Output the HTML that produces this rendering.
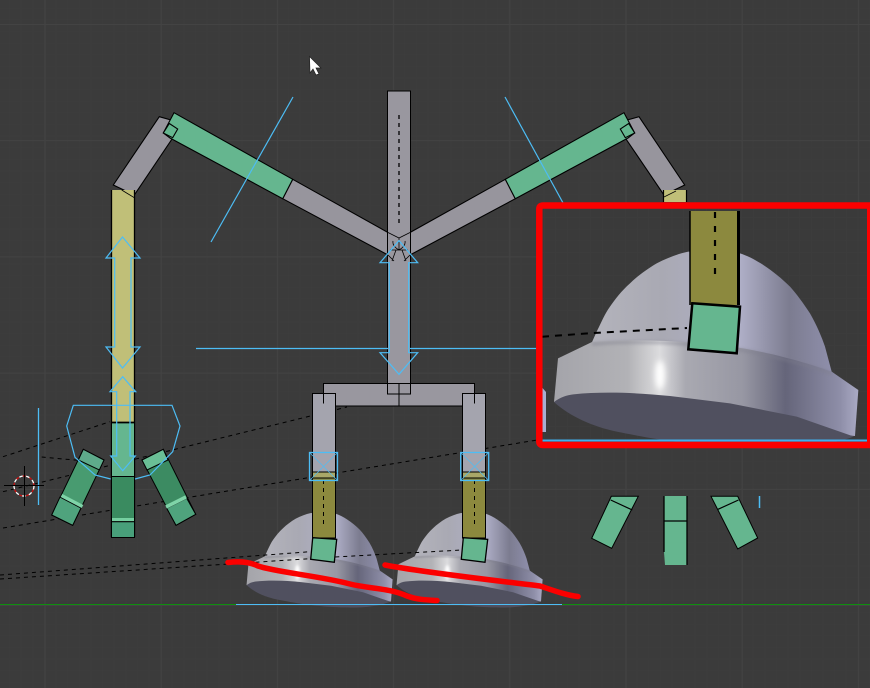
<!DOCTYPE html>
<html><head><meta charset="utf-8"><title>Rig</title>
<style>html,body{margin:0;padding:0;background:#3b3b3b}svg{display:block}</style></head>
<body>
<svg width="870" height="688" viewBox="0 0 870 688" xmlns="http://www.w3.org/2000/svg">
<defs>
<pattern id="minor" width="11.62" height="11.62" patternUnits="userSpaceOnUse" x="10" y="8.5"><path d="M11.62 0V11.62M0 11.62H11.62" stroke="#3d3d3d" fill="none"/></pattern>
<pattern id="major" width="116.2" height="116.2" patternUnits="userSpaceOnUse" x="44.5" y="24"><path d="M.5 0V116.2M0 .5H116.2" stroke="#434343" fill="none"/></pattern>
<linearGradient id="db" gradientUnits="userSpaceOnUse" x1="180" x2="900" y1="0" y2="0"><stop offset="0" stop-color="#b4b4bc"/><stop offset=".3" stop-color="#a9a9b3"/><stop offset=".62" stop-color="#b0b0c8"/><stop offset=".83" stop-color="#7c7c90"/><stop offset="1" stop-color="#8e8eaa"/></linearGradient>
<linearGradient id="br" gradientUnits="userSpaceOnUse" x1="75" x2="985" y1="0" y2="0"><stop offset="0" stop-color="#a4a4aa"/><stop offset=".24" stop-color="#b2b2b6"/><stop offset=".345" stop-color="#dcdcde"/><stop offset=".43" stop-color="#a9a9b1"/><stop offset=".62" stop-color="#9797a3"/><stop offset=".76" stop-color="#65657a"/><stop offset=".94" stop-color="#8e8ea8"/><stop offset="1" stop-color="#aaaac4"/></linearGradient>
<filter id="bl" x="-100%" y="-50%" width="300%" height="200%"><feGaussianBlur stdDeviation="9"/></filter>
<filter id="bl2" x="-10%" y="-50%" width="120%" height="200%"><feGaussianBlur stdDeviation="5"/></filter>
<g id="dome">
<path d="M180 470L200 425C215 395 225 370 240 350C255 328 275 302 300 280C325 256 350 238 380 220C410 205 440 192 475 185L630 190C655 198 680 212 700 225C730 245 755 265 780 290C800 312 820 340 840 370C860 405 875 440 885 470L905 545L800 570L300 500Z" fill="url(#db)"/>
<path d="M84 505L186 456Q400 440 640 475C750 495 850 525 905 545L985 600L975 738L500 700L72 636Z" fill="url(#br)"/>
<path d="M186 462Q400 446 640 481C750 501 850 531 905 551" fill="none" stroke="#7e7e8c" stroke-width="8" opacity=".55" filter="url(#bl2)"/>
<ellipse cx="390" cy="555" rx="15" ry="44" fill="#fff" filter="url(#bl)"/>
<path d="M72 636C90 622 110 615 130 613C220 604 320 608 420 618L600 640L800 680L972 740C880 772 790 778 700 775C520 775 360 745 260 725C190 710 120 680 72 636Z" fill="#50505f"/>
</g>
</defs>
<rect width="870" height="688" fill="#3b3b3b"/>
<rect width="870" height="688" fill="url(#minor)"/>
<rect width="870" height="688" fill="url(#major)"/>

<!-- ground -->
<rect x="0" y="604" width="870" height="1" fill="#0f8f0f"/>

<!-- domes -->
<use href="#dome" transform="translate(235 483.4) scale(.16)"/>
<use href="#dome" transform="translate(385 483.4) scale(.16)"/>
<rect x="236" y="604" width="326" height="1" fill="#4dbdf5"/>

<!-- dashed relationship lines -->
<g stroke="#000" stroke-width="1" stroke-dasharray="4 4" fill="none">
<path d="M3 456.7L110 421.7"/>
<path d="M3 491.7L347 407"/>
<path d="M3 528L537 440"/>
<path d="M41.7 457L93 461.7"/>
<path d="M0 575L310 551.7"/>
<path d="M0 579L335 557L462 550"/>
</g>

<!-- arms -->
<g stroke="#000" stroke-width="1.1" stroke-linejoin="miter">
<path d="M159.3 116.7L113.3 185L134.3 195L172 139L178 122Z" fill="#97959d"/>
<path d="M639 116.7L684.7 185L664 195L626 139L620 122Z" fill="#97959d"/>
<path d="M292.7 179.3L388 232.5V255L282.7 198.7Z" fill="#97959d"/>
<path d="M505.3 179.3L410 232.5V255L515.3 198.7Z" fill="#97959d"/>
<path d="M174 112.7L292.7 179.3L282.7 198.7L170 138L163.3 133Z" fill="#65b68f"/>
<path d="M624 112.7L505.3 179.3L515.3 198.7L628 138L634.7 133Z" fill="#65b68f"/>
<path d="M169.3 123.5L177.7 129L172.7 137.7L163.3 133Z" fill="#65b68f"/>
<path d="M628.7 123.5L620.3 129L625.3 137.7L634.7 133Z" fill="#65b68f"/>
<rect x="112" y="190" width="22" height="232" fill="#c0bf78" stroke="none"/>
<path d="M111.500 190V537M134.500 190V537" stroke-width="1.300" fill="none"/>
<path d="M121.700 190L134.300 197.700" stroke-width=".8" fill="none"/>
<rect x="112" y="423" width="22" height="54" fill="#65b68f" stroke="none"/>
<rect x="112" y="477" width="22" height="41" fill="#3a8b60" stroke="none"/>
<rect x="112" y="518" width="22" height="19" fill="#489f7a" stroke="none"/>
<rect x="112" y="518" width="22" height="3.500" fill="#75cfa0" stroke="none"/>
<path d="M111 521.700H135M111 537.500H135" fill="none"/>
<path d="M112 422.500H134" fill="none" stroke-width="1.800"/>
<path d="M112 476.500H134" fill="none" stroke-width="1"/>
</g>

<!-- left fingers -->
<g stroke="#000" stroke-width="1">
<path d="M83.3 449.3L104 460L72.7 525.3L51.7 515Z" fill="#489b70"/>
<path d="M83.3 449.3L104 460L99.3 470L78.3 460Z" fill="#5eab8b"/>
<path d="M60 497L81 508L72.7 525.3L51.7 515Z" fill="#4fa37d"/>
<path d="M61.500 495.500L82.500 506.500" stroke="#7fd4a8" stroke-width="3.500" fill="none"/>
<path d="M163.3 449.3L142 460L176 525.3L195.7 514.3Z" fill="#3c8b62"/>
<path d="M163.3 449.3L142 460L147 470L168 460Z" fill="#6abf96"/>
<path d="M166.700 508.300L186.700 498.300L195.700 514.300L176 525.300Z" fill="#4fa37d"/>
<path d="M166 507L186 497" stroke="#7fd4a8" stroke-width="3.500" fill="none"/>
</g>

<!-- right fingers -->
<g stroke="#000" stroke-width="1">
<path d="M611.300 496.300H638.300L611.700 548.300L591.700 538.300Z" fill="#65b68f"/>
<path d="M610.700 500L632.300 510" fill="none" stroke-width="1.200"/>
<path d="M711 496.300H737.700L757.700 538L737.700 549Z" fill="#65b68f"/>
<path d="M718 509.300L738.500 500" fill="none" stroke-width="1.200"/>
<path d="M664 496V552L665 565H687V496Z" fill="#65b68f" stroke="none"/>
<path d="M664 496V552M687 496V565M664 521H687" stroke-width="1.300" fill="none"/>
</g>
<path d="M759.500 496V508" stroke="#4dbdf5" stroke-width="1.500"/>

<!-- central spine -->
<g stroke="#000" stroke-width="1">
<rect x="387.500" y="91" width="23" height="303" fill="#99979f"/>
<rect x="323.500" y="383.500" width="151" height="22.500" fill="#99979f"/>
<path d="M387.500 383.500V394H410.500V383.500M399 383.500V406" fill="none"/>
<rect x="312.500" y="393.500" width="23" height="78.500" fill="#a4a4ae"/>
<rect x="462.500" y="393.500" width="23" height="78.500" fill="#a4a4ae"/>
<path d="M323.500 393.500V403.500M474.500 393.500V403.500" fill="none"/>
<rect x="312.500" y="472" width="23" height="66" fill="#8c893e"/>
<rect x="462.500" y="472" width="23" height="66" fill="#8c893e"/>
<rect x="312.500" y="472" width="23" height="6" fill="#a9a768"/>
<rect x="462.500" y="472" width="23" height="6" fill="#a9a768"/>
<path d="M312.700 537.700L336.700 539.300L334.300 562.300L310.700 559.300Z" fill="#65b68f" stroke-width="1.300"/>
<path d="M463.300 537.700L487.700 539.300L485 562.300L461.300 559.300Z" fill="#65b68f" stroke-width="1.300"/>
</g>
<g stroke="#000" stroke-width="1" stroke-dasharray="4 4" fill="none">
<path d="M399 115V225" stroke-width="1.300"/>
<path d="M323.500 480V525M474.500 480V525"/>
</g>
<path d="M388 232.500L399 238L410 232.500M393 241Q392 246 399 250Q406 246 405 241M399 238V250M390 250H408M396 250L392 261M402 250L406 261M388 255L394 261M410 255L404 261" stroke="#000" stroke-width=".8" fill="none"/>

<!-- custom shapes in blue -->
<g stroke="#4dbdf5" stroke-width="1.200" fill="none">
<path d="M293 97L211 242"/>
<path d="M505 97L568 212"/>
<path d="M196 348.500H388M410 348.500H537"/>
<path d="M38.500 408V505" stroke-width="1.300"/>
<path d="M110.700 479L95 475L75 457.300L66.700 426L73.300 405.300H172L180 426L172.700 451.700L150 475L135 479"/>
<path d="M122.500 237L140 258H131V347H140L122.500 368L106 347H114.700V258H106Z"/>
<path d="M122.700 376.700L135.700 391.700H130V456H135.300L122.700 470.700L110.700 456H116.700V391.700H110Z"/>
<path d="M399 240.700L417.700 262.700H408.700V352.700H417.700L399 374.300L380 352.700H389.300V262.700H380Z"/>
<rect x="309.500" y="452.500" width="28" height="28" stroke-width="1.300"/>
<rect x="460.700" y="452.500" width="28" height="28" stroke-width="1.300"/>
<path d="M309.500 452.500L337.500 480.500M337.500 452.500L309.500 480.500M460.700 452.500L488.700 480.500M488.700 452.500L460.700 480.500" stroke-width=".7"/>
</g>

<!-- red scribbles -->
<g stroke="#fb0000" stroke-width="5.500" fill="none" stroke-linecap="round" stroke-linejoin="round">
<path d="M228 562.500C240 561 250 562 258 566C275 572 320 576 350 584C370 589 390 588 407 596C418 600 428 600 437 600.500"/>
<path d="M385 565C420 572 500 581 540 586C552 590 565 595 578 596.500"/>
</g>

<!-- 3D cursor -->
<circle cx="24" cy="486" r="10" fill="none" stroke="#fff" stroke-width="1.300" stroke-dasharray="4 3"/>
<circle cx="24" cy="486" r="10" fill="none" stroke="#d01010" stroke-width="1.300" stroke-dasharray="3 4" stroke-dashoffset="3.500"/>
<path d="M4 485.500H44M24.500 466V506" stroke="#000" stroke-width="1"/>

<!-- mouse cursor -->
<path d="M309.500 56.500L321 68H316L319 74L316 75L313 69L310 73Z" fill="#fff" stroke="#222" stroke-width=".7"/>

<!-- inset -->
<rect x="539" y="207" width="331" height="238" fill="#3a3a3a"/>
<rect x="539" y="207" width="331" height="238" fill="url(#minor)"/>
<use href="#dome" transform="translate(530 190) scale(.33333)"/>
<path d="M542.500 388L546 392V432H542.500Z" fill="#a9aed2"/>
<path d="M542 336.700L593 333L687 328" stroke="#000" stroke-width="2" stroke-dasharray="7 6" fill="none"/>
<rect x="690.500" y="211" width="48" height="94" fill="#8c893e"/>
<path d="M690 211V305" stroke="#000" stroke-width="1.500"/>
<path d="M738.500 211V305" stroke="#000" stroke-width="3"/>
<path d="M715 212V275" stroke="#000" stroke-width="2.200" stroke-dasharray="6 8" fill="none"/>
<path d="M692.300 303.300L740 306.700L736.700 353.300L688.300 349.300Z" fill="#65b68f" stroke="#000" stroke-width="2.500"/>
<rect x="542" y="439.500" width="328" height="2" fill="#40b0ee"/>
<path d="M870 205.500H543Q539.300 205.500 539.300 209V441.500Q539.300 445 543 445H870" fill="none" stroke="#fb0000" stroke-width="6.500"/>
<path d="M868.500 205V445" stroke="#fb0000" stroke-width="3"/>
<rect x="664" y="190" width="22" height="12" fill="#c0bf78"/>
<path d="M663.500 190V202M686.500 190V202" stroke="#000" stroke-width="1.200" fill="none"/>
<path d="M664 197L676 191" stroke="#000" stroke-width=".7"/>
</svg>
</body></html>
